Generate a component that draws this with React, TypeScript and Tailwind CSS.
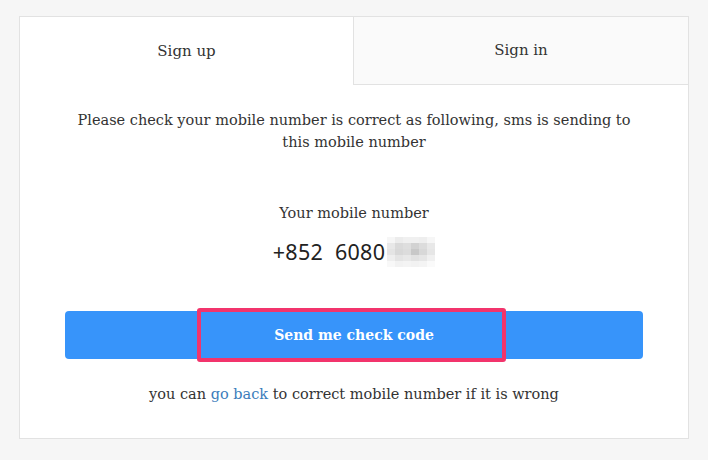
const serif = { fontFamily: '"DejaVu Serif", "Liberation Serif", serif' }

// blurred digits after the visible part of the number
const PIXELS = [
  ['#f6f6f6', '#ececec', '#f0f0f0', '#f0f0f0', '#eeeeee', '#f6f6f6'],
  ['#e8e8e8', '#dadada', '#dedede', '#d2d2d2', '#dcdcdc', '#e8e8e8'],
  ['#e4e4e4', '#d8d8d8', '#dcdcdc', '#c8c8c8', '#d8d8d8', '#e6e6e6'],
  ['#eeeeee', '#e4e4e4', '#e8e8e8', '#e2e2e2', '#e6e6e6', '#f0f0f0'],
  ['#f8f8f8', '#f2f2f2', '#f4f4f4', '#f2f2f2', '#f4f4f4', '#fafafa'],
]

export default function App() {
  return (
    <div className="w-[708px] h-[460px] bg-[#f6f6f6] pt-[16px] pl-[19px]" style={serif}>
      <div className="w-[670px] h-[423px] bg-white border border-[#e2e2e2] flex flex-col">
        {/* tabs */}
        <div className="flex h-[68px]">
          <div className="w-[333px] flex items-center justify-center text-[15px] text-[#333]">Sign up</div>
          <div className="flex-1 flex items-center justify-center text-[15px] text-[#333] bg-[#fafafa] border-l border-b border-[#e2e2e2]">
            Sign in
          </div>
        </div>

        <p className="mt-[24px] text-center text-[14.5px] leading-[22px] text-[#333] px-[54px]">
          Please check your mobile number is correct as following, sms is sending to this mobile number
        </p>

        <p className="mt-[49px] text-center text-[14.5px] leading-[22px] text-[#333]">Your mobile number</p>

        <div className="mt-[14px] flex justify-center items-center h-[28px]">
          <span className="text-[21.5px] text-[#222] tracking-[0.3px]" style={{ fontFamily: '"Noto Sans", "Open Sans", sans-serif' }}>
            +852&nbsp;&nbsp;6080
          </span>
          <div className="ml-[2px] flex flex-col">
            {PIXELS.map((row, r) => (
              <div key={r} className="flex">
                {row.map((c, i) => (
                  <div key={i} className="w-[8px] h-[6px]" style={{ background: c }} />
                ))}
              </div>
            ))}
          </div>
        </div>

        {/* button */}
        <div className="mt-[45px] mx-[45px] relative">
          <button className="w-full h-[48px] rounded-[4px] bg-[#3794fa] text-white font-bold text-[14px]" style={serif}>
            Send me check code
          </button>
          {/* highlight annotation */}
          <div className="absolute left-[132px] top-[-3px] w-[309px] h-[54px] border-[4px] border-[#f2346c] rounded-[3px] pointer-events-none" />
        </div>

        <p className="mt-[24px] text-center text-[14.5px] leading-[22px] text-[#333]">
          you can <a className="text-[#3b7dbb]">go back</a> to correct mobile number if it is wrong
        </p>
      </div>
    </div>
  )
}
